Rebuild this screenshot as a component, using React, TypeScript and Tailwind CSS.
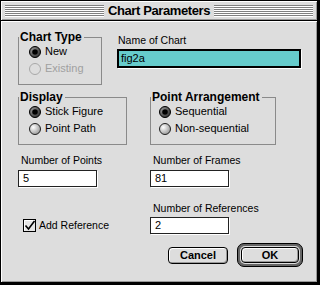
import React from "react";

const Stripes = () => (
  <div className="flex-1 flex flex-col">
    {[0, 1, 2, 3, 4, 5].map((i) => (
      <div
        key={i}
        className="h-[2px] border-t border-t-[#808080] border-b border-b-white"
      />
    ))}
  </div>
);

const Radio = ({ on, disabled }: { on?: boolean; disabled?: boolean }) => (
  <svg width="12" height="12" viewBox="0 0 12 12" className="shrink-0">
    <defs>
      <radialGradient id="radio-off" cx="35%" cy="35%" r="70%">
        <stop offset="0%" stopColor="#ffffff" />
        <stop offset="100%" stopColor="#999999" />
      </radialGradient>
      <radialGradient id="radio-on" cx="35%" cy="35%" r="70%">
        <stop offset="0%" stopColor="#999999" />
        <stop offset="100%" stopColor="#333333" />
      </radialGradient>
    </defs>
    {disabled ? (
      <circle cx="6" cy="6" r="5.5" fill="none" stroke="#a8a8a8" />
    ) : on ? (
      <>
        <circle cx="6" cy="6" r="5.5" fill="url(#radio-on)" stroke="#000" />
        <circle cx="6" cy="6" r="2.8" fill="#000" />
      </>
    ) : (
      <circle cx="6" cy="6" r="5.5" fill="url(#radio-off)" stroke="#222" />
    )}
  </svg>
);

const Checkbox = () => (
  <svg width="13" height="13" viewBox="0 0 13 13" className="shrink-0">
    <rect x="0.5" y="0.5" width="12" height="12" fill="#e6e6e6" stroke="#000" />
    <path d="M1.5 11.5V1.5H11.5" fill="none" stroke="#fff" />
    <path d="M2.5 6.5L5.5 10L11.5 2" fill="none" stroke="#000" strokeWidth="1.6" />
  </svg>
);

const Field = ({ value }: { value: string }) => (
  <div className="w-[79px] h-[17px] border border-[#222] bg-white px-[4px] text-[11px] leading-[15px] shadow-[1px_1px_0_#fff]">
    {value}
  </div>
);

const Label = ({ text }: { text: string }) => (
  <div className="h-[13px] pl-[3px] text-[10.5px] leading-[13px]">{text}</div>
);

const RadioRow = ({
  label,
  on,
  disabled,
}: {
  label: string;
  on?: boolean;
  disabled?: boolean;
}) => (
  <div
    className={`h-[17px] flex items-center gap-[4px] text-[11px] ${
      disabled ? "text-[#a0a0a0]" : "text-black"
    }`}
  >
    <Radio on={on} disabled={disabled} />
    <span>{label}</span>
  </div>
);

const Group = ({
  title,
  width,
  inset,
  children,
}: {
  title: string;
  width: string;
  inset: string;
  children: React.ReactNode;
}) => (
  <fieldset className={`${width} border border-[#8a8a8a] pb-[7px]`}>
    <legend className="pl-px pr-[2px] text-[12px] font-bold leading-[12px]">
      {title}
    </legend>
    <div className={inset}>{children}</div>
  </fieldset>
);

export default function App() {
  return (
    <div className="w-[320px] h-[285px] flex flex-col border-black border-t border-l border-r-[3px] border-b-[3px] font-['Liberation_Sans',Arial,sans-serif] text-black select-none">
      {/* title bar */}
      <div className="h-[19px] shrink-0 bg-[#dddddd] flex items-center px-[4px] gap-[3px] shadow-[inset_1px_1px_0_#fff,inset_-1px_-1px_0_#999]">
        <Stripes />
        <div className="text-[13px] font-bold tracking-[-0.4px] leading-[16px] px-px">
          Chart Parameters
        </div>
        <Stripes />
      </div>
      <div className="h-px shrink-0 bg-black" />

      {/* body */}
      <div className="flex-1 bg-[#dddddd] shadow-[inset_1px_1px_0_#fff,inset_-1px_-1px_0_#999] pl-[17px] pr-[14px] pt-[10px] flex flex-col">
        <div className="flex items-start">
          <Group title="Chart Type" width="w-[84px]" inset="pl-[10px]">
            <RadioRow label="New" on />
            <RadioRow label="Existing" disabled />
          </Group>
          <div className="ml-[15px] mt-[3px] flex flex-col">
            <div className="h-[13px] pl-px text-[10.5px] leading-[13px]">
              Name of Chart
            </div>
            <div className="mt-[2px] w-[184px] h-[19px] border-2 border-black bg-[#66cccc] pl-[2px] text-[11px] leading-[14px] shadow-[1px_1px_0_#fff]">
              fig2a
            </div>
          </div>
        </div>

        <div className="mt-[6px] flex items-start">
          <Group title="Display" width="w-[109px]" inset="pl-[10px]">
            <RadioRow label="Stick Figure" on />
            <RadioRow label="Point Path" />
          </Group>
          <div className="ml-[23px]">
            <Group title="Point Arrangement" width="w-[126px]" inset="pl-[8px]">
              <RadioRow label="Sequential" on />
              <RadioRow label="Non-sequential" />
            </Group>
          </div>
        </div>

        <div className="mt-[9px] flex">
          <div className="w-[132px] flex flex-col">
            <Label text="Number of Points" />
            <div className="mt-[3px]">
              <Field value="5" />
            </div>
          </div>
          <div className="flex flex-col">
            <Label text="Number of Frames" />
            <div className="mt-[3px]">
              <Field value="81" />
            </div>
          </div>
        </div>

        <div className="mt-[15px] flex">
          <div className="w-[132px] self-end mb-[2px] pl-[5px] flex items-center gap-[3px] text-[10.5px] leading-[13px]">
            <Checkbox />
            <span>Add Reference</span>
          </div>
          <div className="flex flex-col">
            <Label text="Number of References" />
            <div className="mt-[2px]">
              <Field value="2" />
            </div>
          </div>
        </div>

        <div className="mt-[9px] flex items-center justify-end gap-[9px]">
          <div className="w-[60px] h-[17px] rounded-[4px] border border-black bg-[#dddddd] shadow-[inset_1px_1px_0_#fff,inset_-1px_-1px_0_#999] flex items-center justify-center text-[11px] font-bold leading-none">
            Cancel
          </div>
          <div className="w-[66px] h-[24px] rounded-[7px] border border-black bg-[#666666] p-[2px]">
            <div className="w-full h-full rounded-[5px] bg-[#dddddd] p-px flex">
              <div className="flex-1 rounded-[4px] border border-black bg-[#dddddd] shadow-[inset_1px_1px_0_#fff,inset_-1px_-1px_0_#999] flex items-center justify-center text-[11px] font-bold leading-none">
                OK
              </div>
            </div>
          </div>
        </div>
      </div>
    </div>
  );
}
